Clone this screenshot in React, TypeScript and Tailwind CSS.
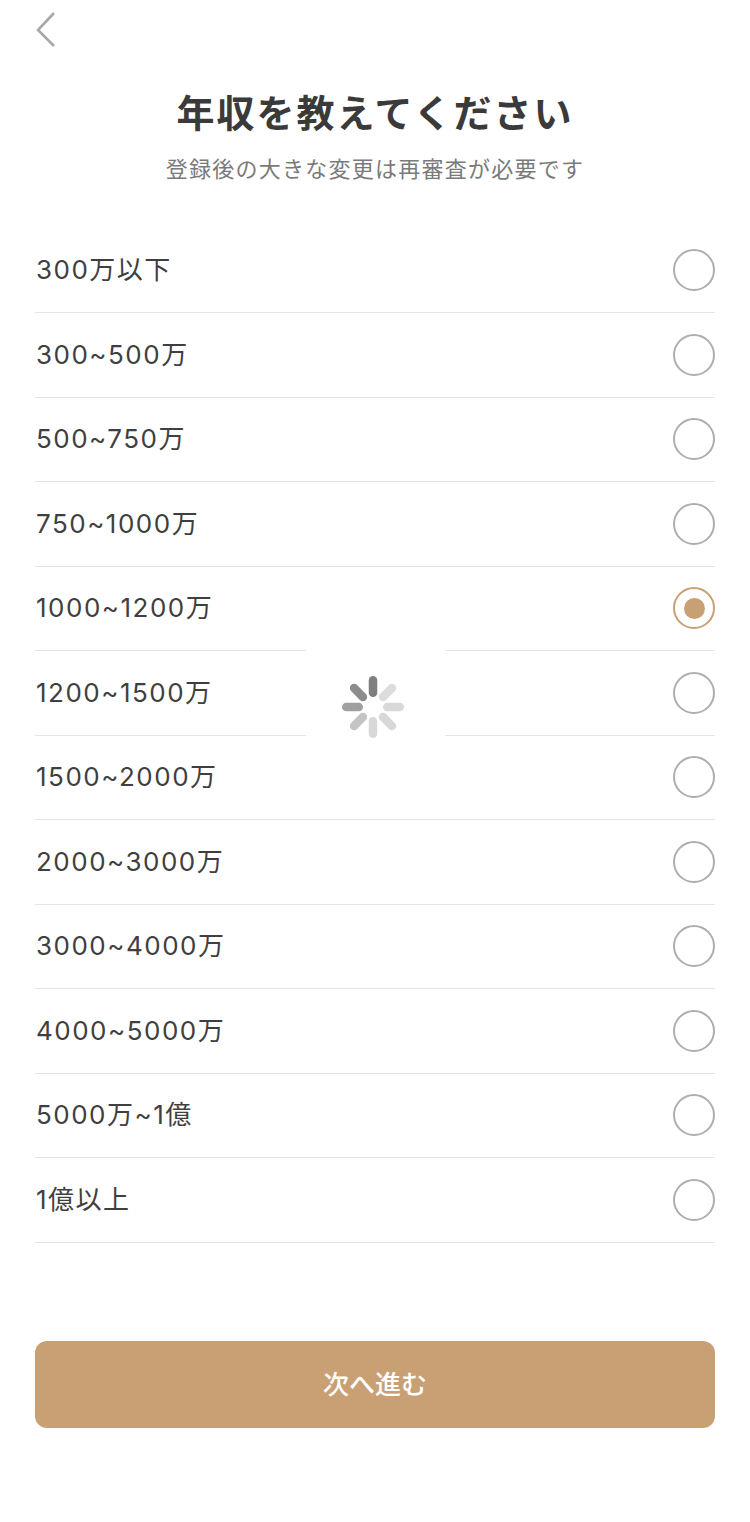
const options = [
  "300万以下",
  "300~500万",
  "500~750万",
  "750~1000万",
  "1000~1200万",
  "1200~1500万",
  "1500~2000万",
  "2000~3000万",
  "3000~4000万",
  "4000~5000万",
  "5000万~1億",
  "1億以上",
];

const font = "font-['Noto_Sans_CJK_JP','Noto_Sans',sans-serif]";

function Spinner() {
  const spokes = [
    { a: 0, c: "#7f7f7f" },
    { a: 45, c: "#dcdcdc" },
    { a: 90, c: "#d8d8d8" },
    { a: 135, c: "#d8d8d8" },
    { a: 180, c: "#d8d8d8" },
    { a: 225, c: "#c4c4c4" },
    { a: 270, c: "#a0a0a0" },
    { a: 315, c: "#8c8c8c" },
  ];
  return (
    <svg width="62" height="62" viewBox="0 0 62 62">
      {spokes.map((s) => (
        <rect key={s.a} x="26.75" y="0" width="8.5" height="21" rx="4.25" fill={s.c} transform={`rotate(${s.a} 31 31)`} />
      ))}
    </svg>
  );
}

export default function App() {
  return (
    <div className={`relative w-[750px] h-[1522px] bg-white overflow-hidden flex flex-col ${font}`}>
      <div className="h-[88px] pl-[35px] pt-[11px] shrink-0">
        <svg width="24" height="38" viewBox="0 0 24 38" fill="none">
          <path d="M19 2 L3 19 L19 35" stroke="#a8a8a8" strokeWidth="2.6" />
        </svg>
      </div>
      <h1 className="text-center text-[38px] leading-[46px] font-bold text-[#3a3a3a] tracking-[2px] shrink-0">
        年収を教えてください
      </h1>
      <p className="text-center text-[22px] leading-[30px] tracking-[1.25px] mt-[18px] text-[#7a7a7a] shrink-0">
        登録後の大きな変更は再審査が必要です
      </p>
      <div className="mt-[46.5px] mx-[35px] flex flex-col shrink-0">
        {options.map((o, i) => (
          <div
            key={o}
            className="h-[84.5px] flex items-center justify-between border-b border-[#e4e4e4]"
          >
            <span className="ml-px font-['Inter','Noto_Sans_CJK_JP',sans-serif] text-[26px] tracking-[1.5px] text-[#3f3f3f] leading-none">
              {o}
            </span>
            {i === 4 ? (
              <span className="w-[42px] h-[42px] rounded-full border-2 border-[#c8a074] flex items-center justify-center">
                <span className="w-[21px] h-[21px] rounded-full bg-[#c8a074]" />
              </span>
            ) : (
              <span className="w-[42px] h-[42px] rounded-full border-2 border-[#aeaeae]" />
            )}
          </div>
        ))}
      </div>
      <button className="mt-[98px] mx-[35px] h-[87px] rounded-[12px] bg-[#c8a074] text-white text-[26px] font-medium pb-[3px] shrink-0">
        次へ進む
      </button>
      <div className="absolute left-[306px] top-[638px] w-[139px] h-[139px] bg-white flex items-center justify-center pr-[6px] pb-[2px]">
        <Spinner />
      </div>
    </div>
  );
}
